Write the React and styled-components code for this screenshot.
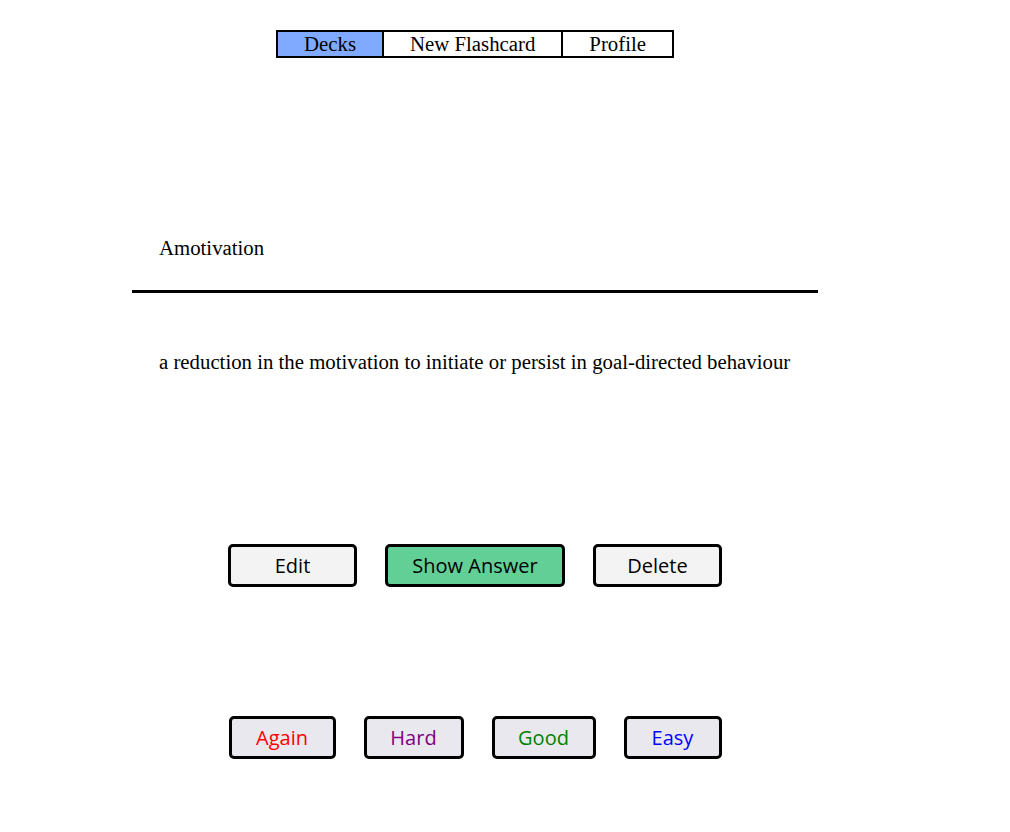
import styled, { createGlobalStyle } from 'styled-components';

const Global = createGlobalStyle`
body {
  margin: 0;
  background: #fff;
  font-family: "Liberation Serif", "Times New Roman", serif;
}
`

const Page = styled.div`
width: 950px;
display: flex;
flex-direction: column;
align-items: center;
padding-top: 30px;
`
const Nav = styled.nav`
display: flex;
border: 2px solid #000;
`
const NavItem = styled.div`
padding: 0 26px;
font-size: 20.8px;
line-height: 24px;
color: #000;
background: ${p => (p.active ? '#80aaff' : '#fff')};
border-left: ${p => (p.first ? 'none' : '2px solid #000')};
`
const Card = styled.div`
width: 686px;
margin-top: 178px;
`
const Front = styled.div`
padding: 0 27px;
font-size: 20.8px;
line-height: 24px;
`
const Rule = styled.hr`
margin: 30px 0 0;
border: none;
height: 3px;
background: #000;
`
const Back = styled.div`
margin-top: 57px;
padding: 0 27px;
font-size: 20.8px;
line-height: 24px;
`
const Row = styled.div`
display: flex;
gap: 28px;
margin-top: ${p => p.top}px;
`
const Button = styled.button`
box-sizing: border-box;
width: ${p => p.w}px;
height: 43px;
border: 3px solid #000;
border-radius: 5px;
background: ${p => p.bg || '#f3f3f3'};
color: ${p => p.color || '#000'};
font-family: "Open Sans", "Noto Sans", sans-serif;
font-size: 20px;
padding: 0;
cursor: pointer;
`

const App = () => {
  return (
    <Page>
      <Global />
      <Nav>
        <NavItem first active>Decks</NavItem>
        <NavItem>New Flashcard</NavItem>
        <NavItem>Profile</NavItem>
      </Nav>
      <Card>
        <Front>Amotivation</Front>
        <Rule />
        <Back>a reduction in the motivation to initiate or persist in goal-directed behaviour</Back>
      </Card>
      <Row top={170}>
        <Button w={129}>Edit</Button>
        <Button w={180} bg="#62d096">Show Answer</Button>
        <Button w={129}>Delete</Button>
      </Row>
      <Row top={129}>
        <Button w={107} bg="#e9e8ee" color="red">Again</Button>
        <Button w={100} bg="#e9e8ee" color="purple">Hard</Button>
        <Button w={104} bg="#e9e8ee" color="green">Good</Button>
        <Button w={98} bg="#e9e8ee" color="blue">Easy</Button>
      </Row>
    </Page>
  )
}

export default App
